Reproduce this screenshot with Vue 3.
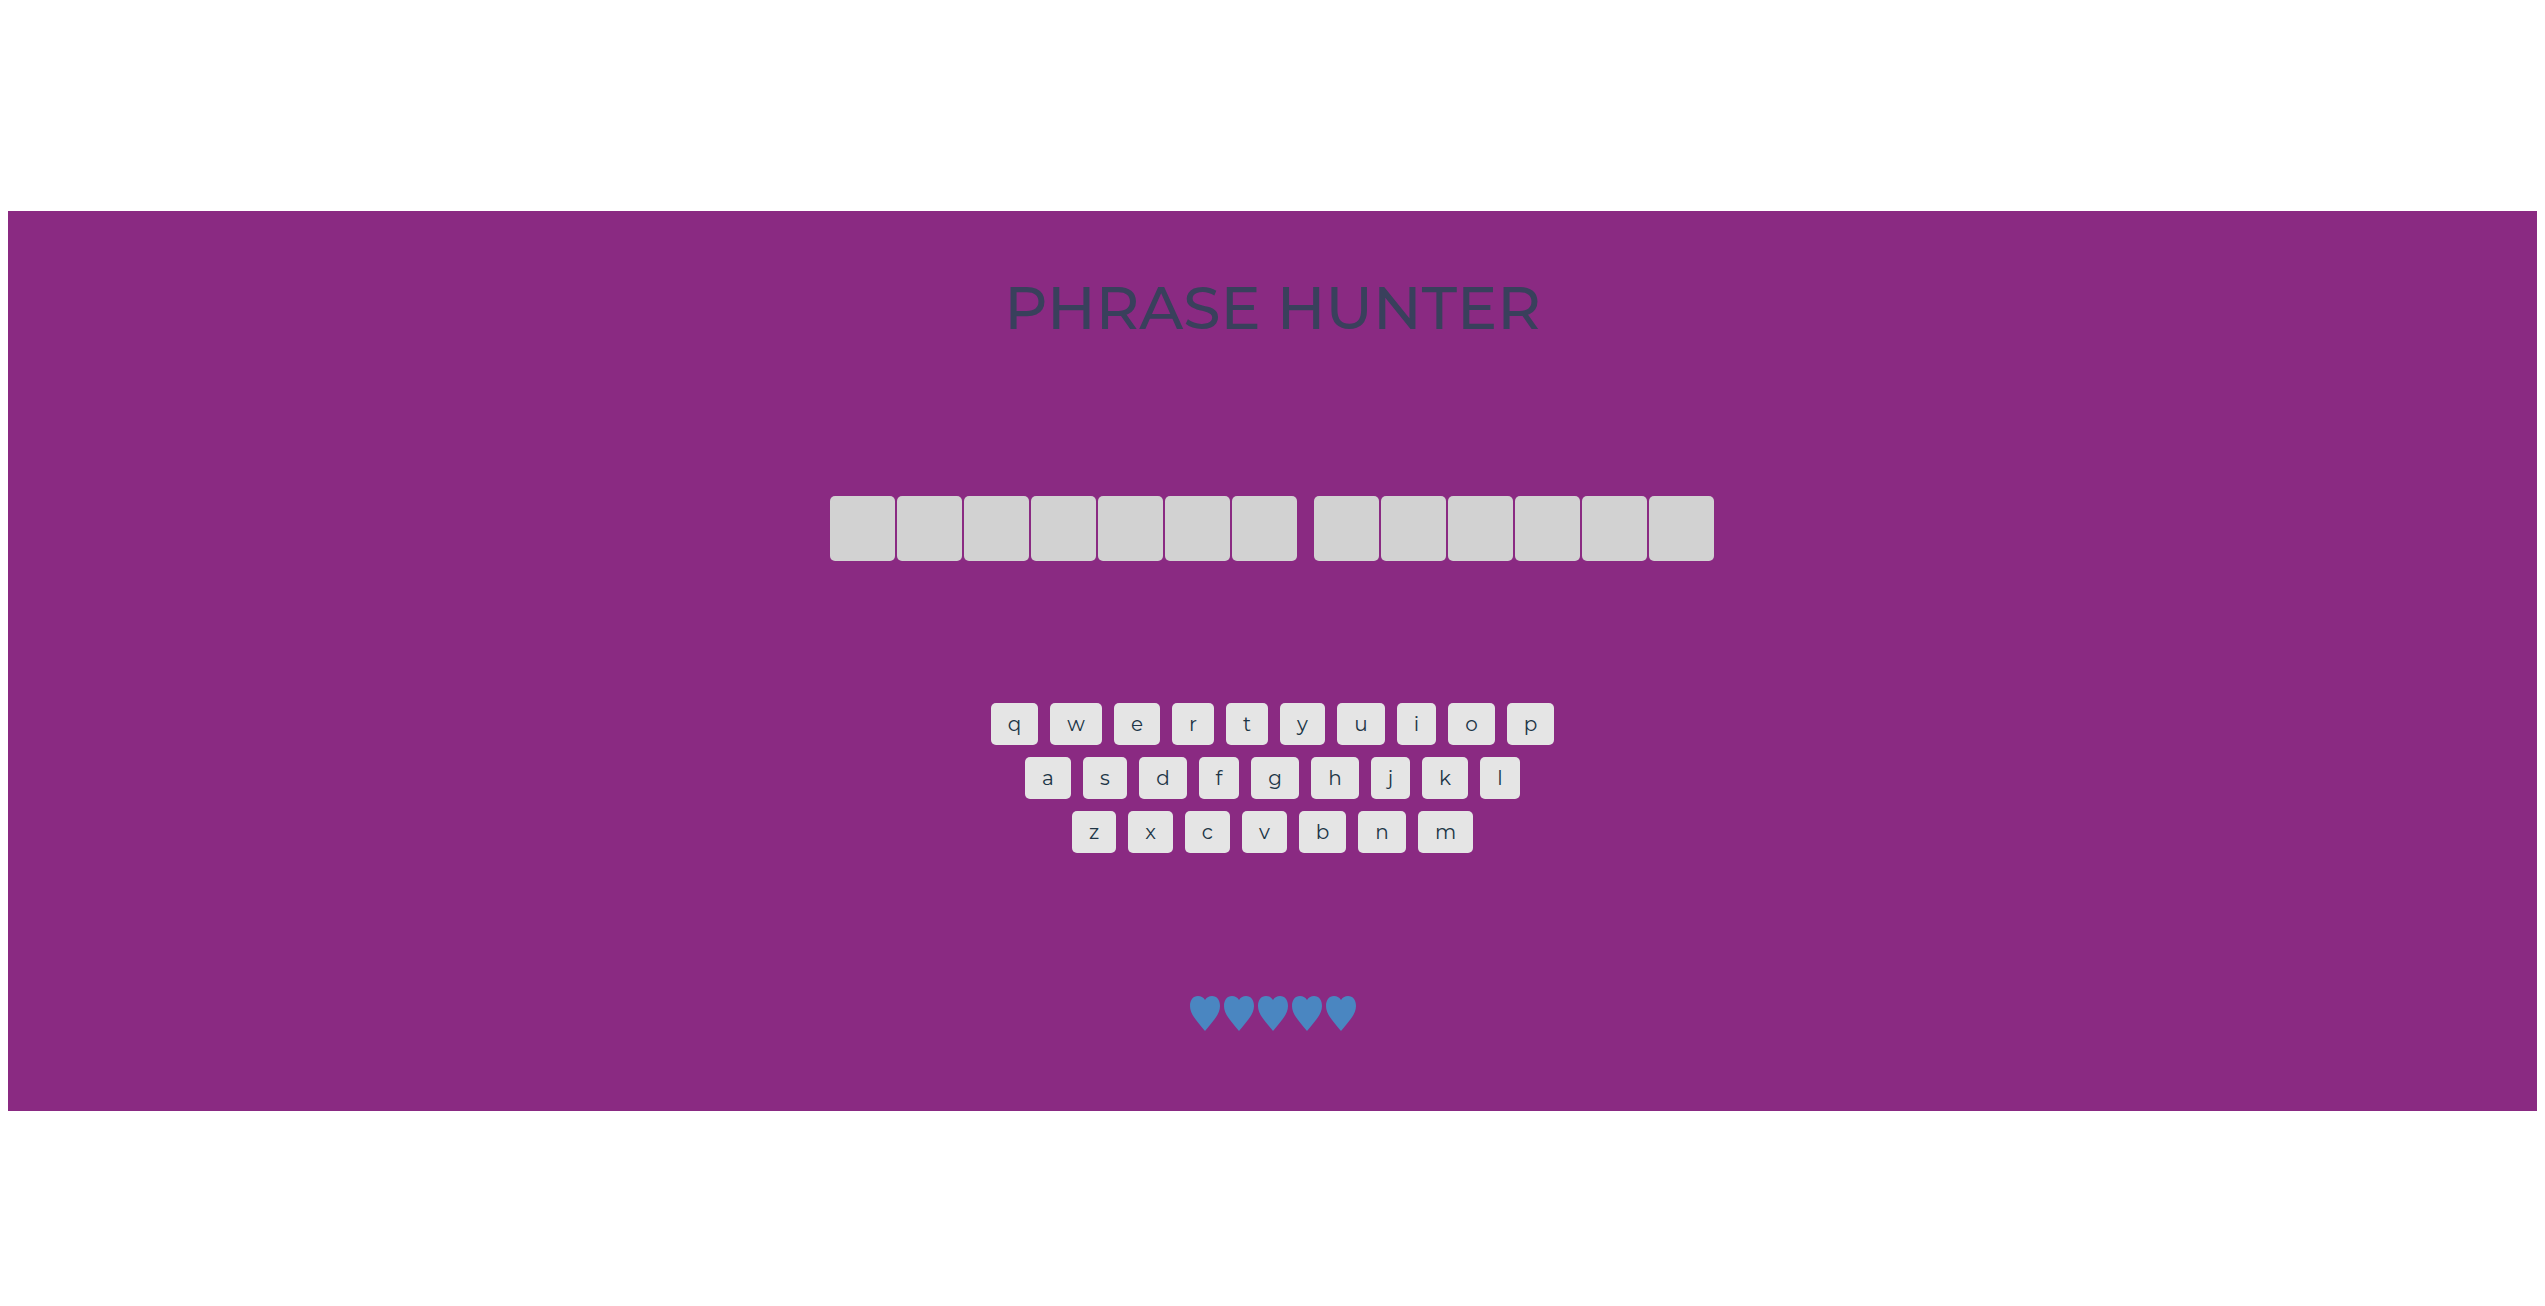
<script setup>
const words = [7, 6]

const rows = [
  [['q', 47], ['w', 52], ['e', 46], ['r', 42], ['t', 42], ['y', 45], ['u', 48], ['i', 39], ['o', 47], ['p', 47]],
  [['a', 46], ['s', 44], ['d', 48], ['f', 40], ['g', 48], ['h', 48], ['j', 39], ['k', 46], ['l', 40]],
  [['z', 44], ['x', 45], ['c', 45], ['v', 45], ['b', 47], ['n', 48], ['m', 55]],
]

const lives = 5
</script>

<template>
  <main class="game">
    <h1 class="title">PHRASE HUNTER</h1>

    <div class="phrase">
      <ul v-for="(length, w) in words" :key="w" class="word">
        <li v-for="n in length" :key="n" class="tile"></li>
      </ul>
    </div>

    <div class="keyboard">
      <div v-for="(row, r) in rows" :key="r" class="keyrow">
        <button
          v-for="[letter, width] in row"
          :key="letter"
          type="button"
          class="key"
          :style="{ width: width + 'px' }"
        >{{ letter }}</button>
      </div>
    </div>

    <div class="lives">
      <svg v-for="n in lives" :key="n" class="heart" viewBox="0 0 30 35" aria-hidden="true">
        <path d="M15 4C17 1 19 0 22 0C27 0 30 4 30 10C30 18 24 24 15 35C6 24 0 18 0 10C0 4 3 0 8 0C11 0 13 1 15 4Z" />
      </svg>
    </div>
  </main>
</template>

<style>
body {
  background: #fff;
}
</style>

<style scoped>
.game {
  display: flex;
  flex-direction: column;
  align-items: center;
  box-sizing: border-box;
  margin: 211px 8px 0;
  padding: 60px 0 80px;
  background: #8a2a82;
  font-family: Montserrat, Inter, sans-serif;
}

.title {
  margin: 0;
  color: #39405c;
  font-size: 60px;
  font-weight: 500;
  line-height: 74px;
}

.phrase {
  display: flex;
  gap: 15px;
  margin-top: 151px;
}

.word {
  display: flex;
  margin: 0;
  padding: 0;
  list-style: none;
}

.tile {
  width: 65px;
  height: 65px;
  margin-right: 2px;
  border-radius: 5px;
  background: #d2d2d2;
}

.keyboard {
  display: flex;
  flex-direction: column;
  gap: 12px;
  margin-top: 142px;
}

.keyrow {
  display: flex;
  justify-content: center;
  gap: 12px;
}

.key {
  height: 42px;
  padding: 0;
  border: 0;
  border-radius: 5px;
  background: #e5e5e5;
  color: #203546;
  font-family: inherit;
  font-size: 20px;
  line-height: 42px;
  cursor: pointer;
}

.lives {
  display: flex;
  gap: 4px;
  margin-top: 143px;
}

.heart {
  display: block;
  width: 30px;
  height: 35px;
  fill: #4a86c1;
}
</style>
